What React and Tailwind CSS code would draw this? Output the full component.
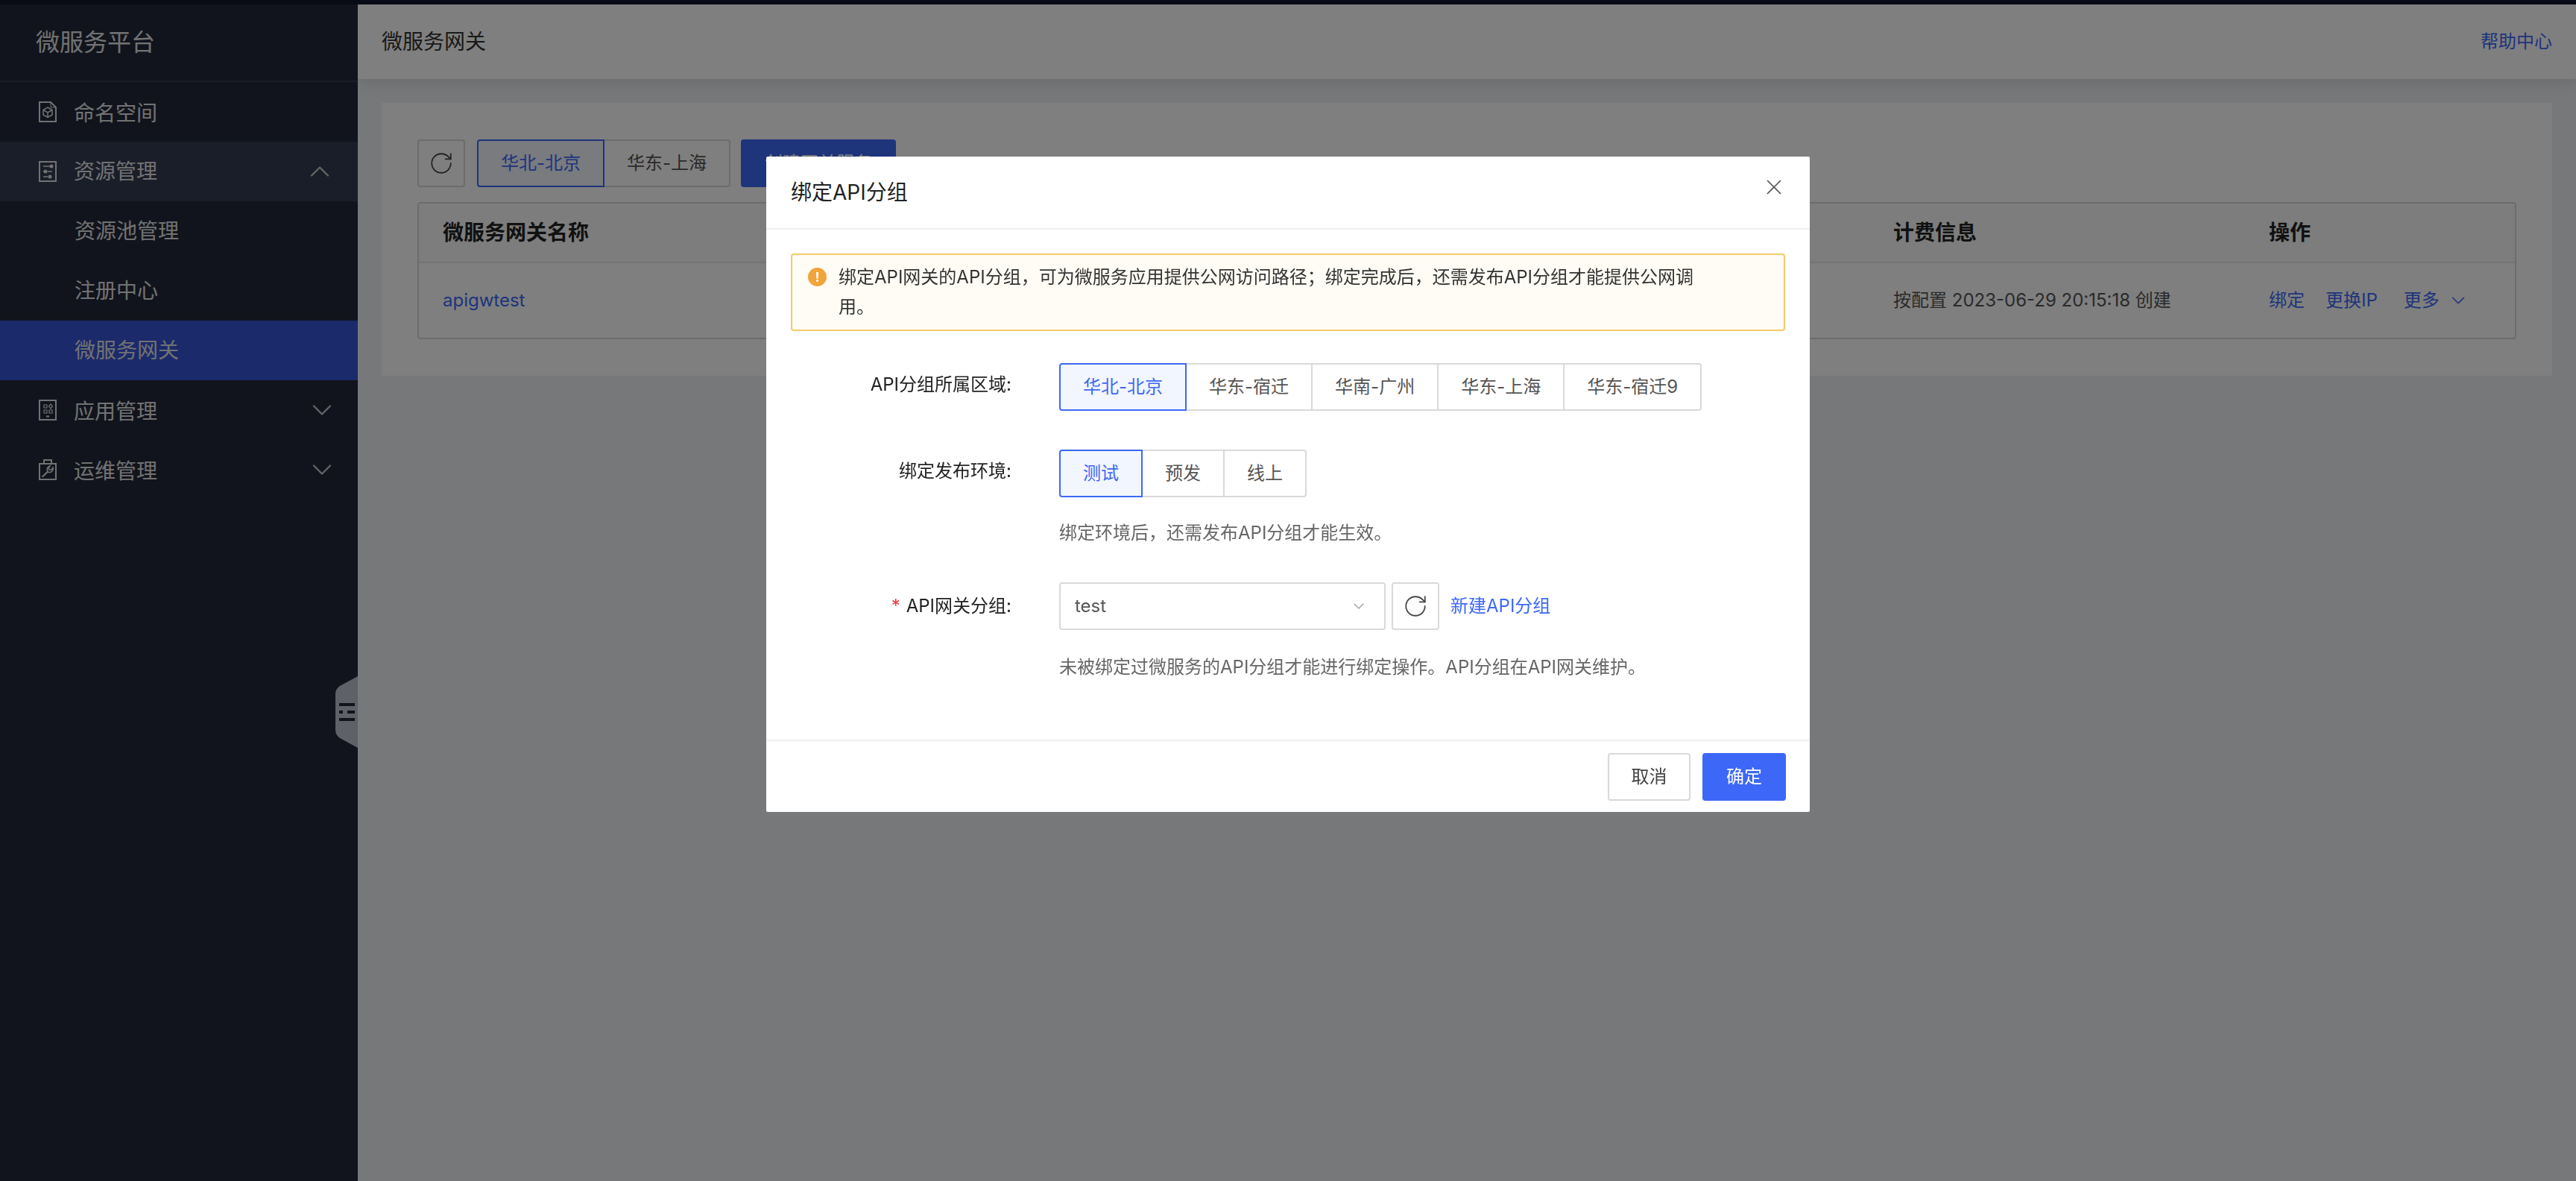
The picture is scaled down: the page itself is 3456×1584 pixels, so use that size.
import React from "react";
import { RotateCw, ChevronDown, ChevronUp, X } from "lucide-react";

const Doc = ({ children }) => (
  <svg width="24" height="28" viewBox="0 0 24 28" fill="none" stroke="currentColor" strokeWidth="2">
    {children}
  </svg>
);

const NamespaceIcon = () => (
  <Doc>
    <path d="M1 1h15l7 7v19H1z" />
    <path d="M16 1v7h7" strokeWidth="1" />
    <path d="M12 8l6 3.5v6.500L12 21.500 6 18v-6.500zM6 11.500l6 3.500 6-3.500M12 15v6.500" strokeWidth="1.500" />
  </Doc>
);

const ResourceIcon = () => (
  <Doc>
    <rect x="1" y="1" width="22" height="26" />
    <path d="M6 7h10M6 14h3M12 14h6M6 21h6" strokeWidth="1.500" />
    <circle cx="17" cy="7" r="2.500" fill="currentColor" stroke="none" />
    <circle cx="9" cy="14" r="2.500" fill="currentColor" stroke="none" />
    <circle cx="15" cy="21" r="2.500" fill="currentColor" stroke="none" />
  </Doc>
);

const AppIcon = () => (
  <Doc>
    <rect x="1" y="1" width="22" height="26" />
    <path d="M7 7h4v4H7zM7 14h4v4H7zM14 14h4v4h-4zM16 6l2.500 3-2.500 3-2.500-3z" strokeWidth="1.200" />
    <path d="M10 22.500h4" />
  </Doc>
);

const OpsIcon = () => (
  <Doc>
    <rect x="1" y="6" width="22" height="21" />
    <path d="M7 6V1h10v5" />
    <path d="M5 23l7-7a4.500 4.500 0 0 1 1-6l2-1-2 3 1 2 3 0 2-3a5 5 0 0 1-7 6l-6 6z" strokeWidth="1.500" />
  </Doc>
);

const MenuRow = ({ icon, label, open, noChevron }) => (
  <div
    className={`flex items-center h-[80px] pl-[52px] pr-[40px] ${open ? "bg-[#343c52]" : ""}`}
  >
    {icon}
    <span className={`ml-[23px] flex-1 text-[28px] ${open ? "" : "mt-[3px]"}`}>{label}</span>
    {noChevron ? null : open ? (
      <ChevronUp size={44} strokeWidth={1.300} className="text-[#c8c8c8] mr-[-11px]" />
    ) : (
      <ChevronDown size={44} strokeWidth={1.300} className="text-[#c8c8c8] mr-[-14px]" />
    )}
  </div>
);

const SubRow = ({ label, active }) => (
  <div
    className={`flex items-center h-[80px] pl-[100px] text-[28px] ${active ? "bg-[#3654d6]" : ""}`}
  >
    {label}
  </div>
);

const Sidebar = () => (
  <aside className="relative flex flex-col w-[480px] shrink-0 bg-[#222839] text-[#e4e4e4]">
    <div className="flex items-center h-[104px] pl-[48px] border-b-2 border-[#343b4e] text-[32px]">
      微服务平台
    </div>
    <MenuRow icon={<NamespaceIcon />} label="命名空间" noChevron />
    <MenuRow icon={<ResourceIcon />} label="资源管理" open />
    <SubRow label="资源池管理" />
    <SubRow label="注册中心" />
    <SubRow label="微服务网关" active />
    <MenuRow icon={<AppIcon />} label="应用管理" />
    <MenuRow icon={<OpsIcon />} label="运维管理" />
    {/* collapse handle */}
    <svg
      className="absolute right-0 top-[901px]"
      width="30"
      height="96"
      viewBox="0 0 30 96"
    >
      <path
        d="M30 0L6 13Q0 17 0 24V72Q0 79 6 83L30 96Z"
        fill="#bcc2cf"
      />
      <path d="M5 38h21M5 58h21M16 48h10" stroke="#222839" strokeWidth="4" />
      <rect x="5" y="46" width="5" height="4" fill="#222839" />
    </svg>
  </aside>
);

const Segmented = ({ items }) => (
  <div className="flex text-[24px] text-[#555]">
    {items.map((item, i) => (
      <div
        key={item}
        className={`relative flex items-center justify-center h-[64px] border-2 px-[30px] ${
          i > 0 ? "ml-[-2px]" : ""
        } ${
          i === 0
            ? "z-10 rounded-l-[4px] border-[#3d68f7] bg-[#f2f6ff] text-[#3d68f7]"
            : "border-[#d9d9d9] bg-white"
        } ${i === items.length - 1 ? "rounded-r-[4px]" : ""}`}
      >
        {item}
      </div>
    ))}
  </div>
);

const RefreshButton = () => (
  <button className="flex items-center justify-center w-[64px] h-[64px] shrink-0 border-2 border-[#d9d9d9] rounded-[4px] bg-white text-[#444]">
    <RotateCw size={34} strokeWidth={1.250} />
  </button>
);

const Gateway = () => (
  <div className="flex-1 flex flex-col min-w-0 bg-[#eff1f4]">
    <header className="flex items-center justify-between h-[100px] px-[32px] bg-white shadow-[0_4px_24px_rgba(0,0,0,0.12)]">
      <span className="text-[28px] text-[#333]">微服务网关</span>
      <a className="text-[24px] text-[#3d68f7]">帮助中心</a>
    </header>
    <div className="mt-[32px] mx-[32px] px-[48px] pt-[49px] pb-[49px] bg-white">
      <div className="flex items-center">
        <RefreshButton />
        <div className="ml-[16px]">
          <Segmented items={["华北-北京", "华东-上海"]} />
        </div>
        <button className="ml-[14px] h-[64px] w-[208px] rounded-[4px] bg-[#3d68f7] text-white text-[24px]">
          创建网关服务
        </button>
      </div>
      <div className="mt-[20px] border-2 border-[#d9d9d9] rounded-[4px]">
        <div className="flex items-center h-[80px] pl-[32px] border-b-2 border-[#e8e8e8] bg-[#fafafa] text-[28px] font-bold text-[#222]">
          <div className="w-[1946px]">微服务网关名称</div>
          <div className="w-[504px]">计费信息</div>
          <div>操作</div>
        </div>
        <div className="flex items-center h-[100px] pl-[32px] text-[24px] text-[#555]">
          <div className="w-[1946px] text-[#3d68f7]">apigwtest</div>
          <div className="w-[504px]">按配置 2023-06-29 20:15:18 创建</div>
          <div className="flex items-center gap-[28px] text-[#3d68f7]">
            <span>绑定</span>
            <span>更换IP</span>
            <span className="flex items-center gap-[10px] ml-[7px]">
              更多
              <ChevronDown size={30} strokeWidth={1.300} />
            </span>
          </div>
        </div>
      </div>
    </div>
  </div>
);

const FormRow = ({ label, required, children, className }) => (
  <div className={`flex items-center ${className}`}>
    <div className={`w-[296px] shrink-0 text-right text-[24px] text-[#222] ${required ? "" : "mb-[6px]"}`}>
      {required && <span className="text-[#e5353b] mr-[8px]">*</span>}
      {label}:
    </div>
    <div className="ml-[64px] flex items-center">{children}</div>
  </div>
);

const BindDialog = () => (
  <div className="fixed inset-0 z-20 flex items-start justify-center pt-[210px] bg-black/50">
    <div className="flex flex-col w-[1400px] h-[879px] rounded-[2px] bg-white">
      <div className="flex items-center justify-between h-[98px] pl-[33px] pr-[31px] border-b-2 border-[#f0f0f0]">
        <span className="text-[28px] text-[#222]">绑定API分组</span>
        <X size={34} strokeWidth={1.200} className="text-[#555] mb-[14px]" />
      </div>
      <div className="flex-1 pt-[32px] pl-[33px] pr-[33px]">
        <div className="flex items-start h-[104px] pt-[10px] pl-[21px] border-2 border-[#f5c96a] rounded-[4px] bg-[#fffcf5]">
          <span className="flex items-center justify-center w-[25px] h-[25px] mt-[7px] shrink-0 rounded-full bg-[#f2a33a] text-white text-[18px] font-bold">
            !
          </span>
          <p className="ml-[16px] w-[1160px] text-[24px] leading-[40px] text-[#333]">
            绑定API网关的API分组，可为微服务应用提供公网访问路径；绑定完成后，还需发布API分组才能提供公网调用。
          </p>
        </div>
        <FormRow label="API分组所属区域" className="mt-[43px]">
          <Segmented items={["华北-北京", "华东-宿迁", "华南-广州", "华东-上海", "华东-宿迁9"]} />
        </FormRow>
        <FormRow label="绑定发布环境" className="mt-[52px]">
          <Segmented items={["测试", "预发", "线上"]} />
        </FormRow>
        <p className="mt-[28px] ml-[360px] text-[24px] leading-[40px] text-[#666]">
          绑定环境后，还需发布API分组才能生效。
        </p>
        <FormRow label="API网关分组" required className="mt-[46px]">
          <div className="flex items-center justify-between w-[438px] h-[64px] pl-[19px] pr-[22px] border-2 border-[#d9d9d9] rounded-[4px] text-[24px] text-[#555]">
            test
            <ChevronDown size={24} strokeWidth={1.200} className="text-[#999]" />
          </div>
          <div className="ml-[8px]">
            <RefreshButton />
          </div>
          <a className="ml-[15px] text-[24px] text-[#3d68f7]">新建API分组</a>
        </FormRow>
        <p className="mt-[30px] ml-[360px] text-[24px] leading-[40px] text-[#666]">
          未被绑定过微服务的API分组才能进行绑定操作。API分组在API网关维护。
        </p>
      </div>
      <div className="flex justify-end gap-[16px] h-[97px] pt-[16px] pr-[32px] border-t-2 border-[#f0f0f0]">
        <button className="w-[111px] h-[64px] border-2 border-[#d9d9d9] rounded-[4px] bg-white text-[24px] text-[#444]">
          取消
        </button>
        <button className="w-[112px] h-[64px] rounded-[4px] bg-[#3d68f7] text-[24px] text-white">
          确定
        </button>
      </div>
    </div>
  </div>
);

export default function App() {
  return (
    <div className="flex flex-col h-screen overflow-hidden font-[Inter,'Noto_Sans_CJK_SC',sans-serif]">
      <div className="h-[6px] shrink-0 bg-[#12182c]" />
      <div className="flex flex-1 min-h-0">
        <Sidebar />
        <Gateway />
      </div>
      <BindDialog />
    </div>
  );
}
